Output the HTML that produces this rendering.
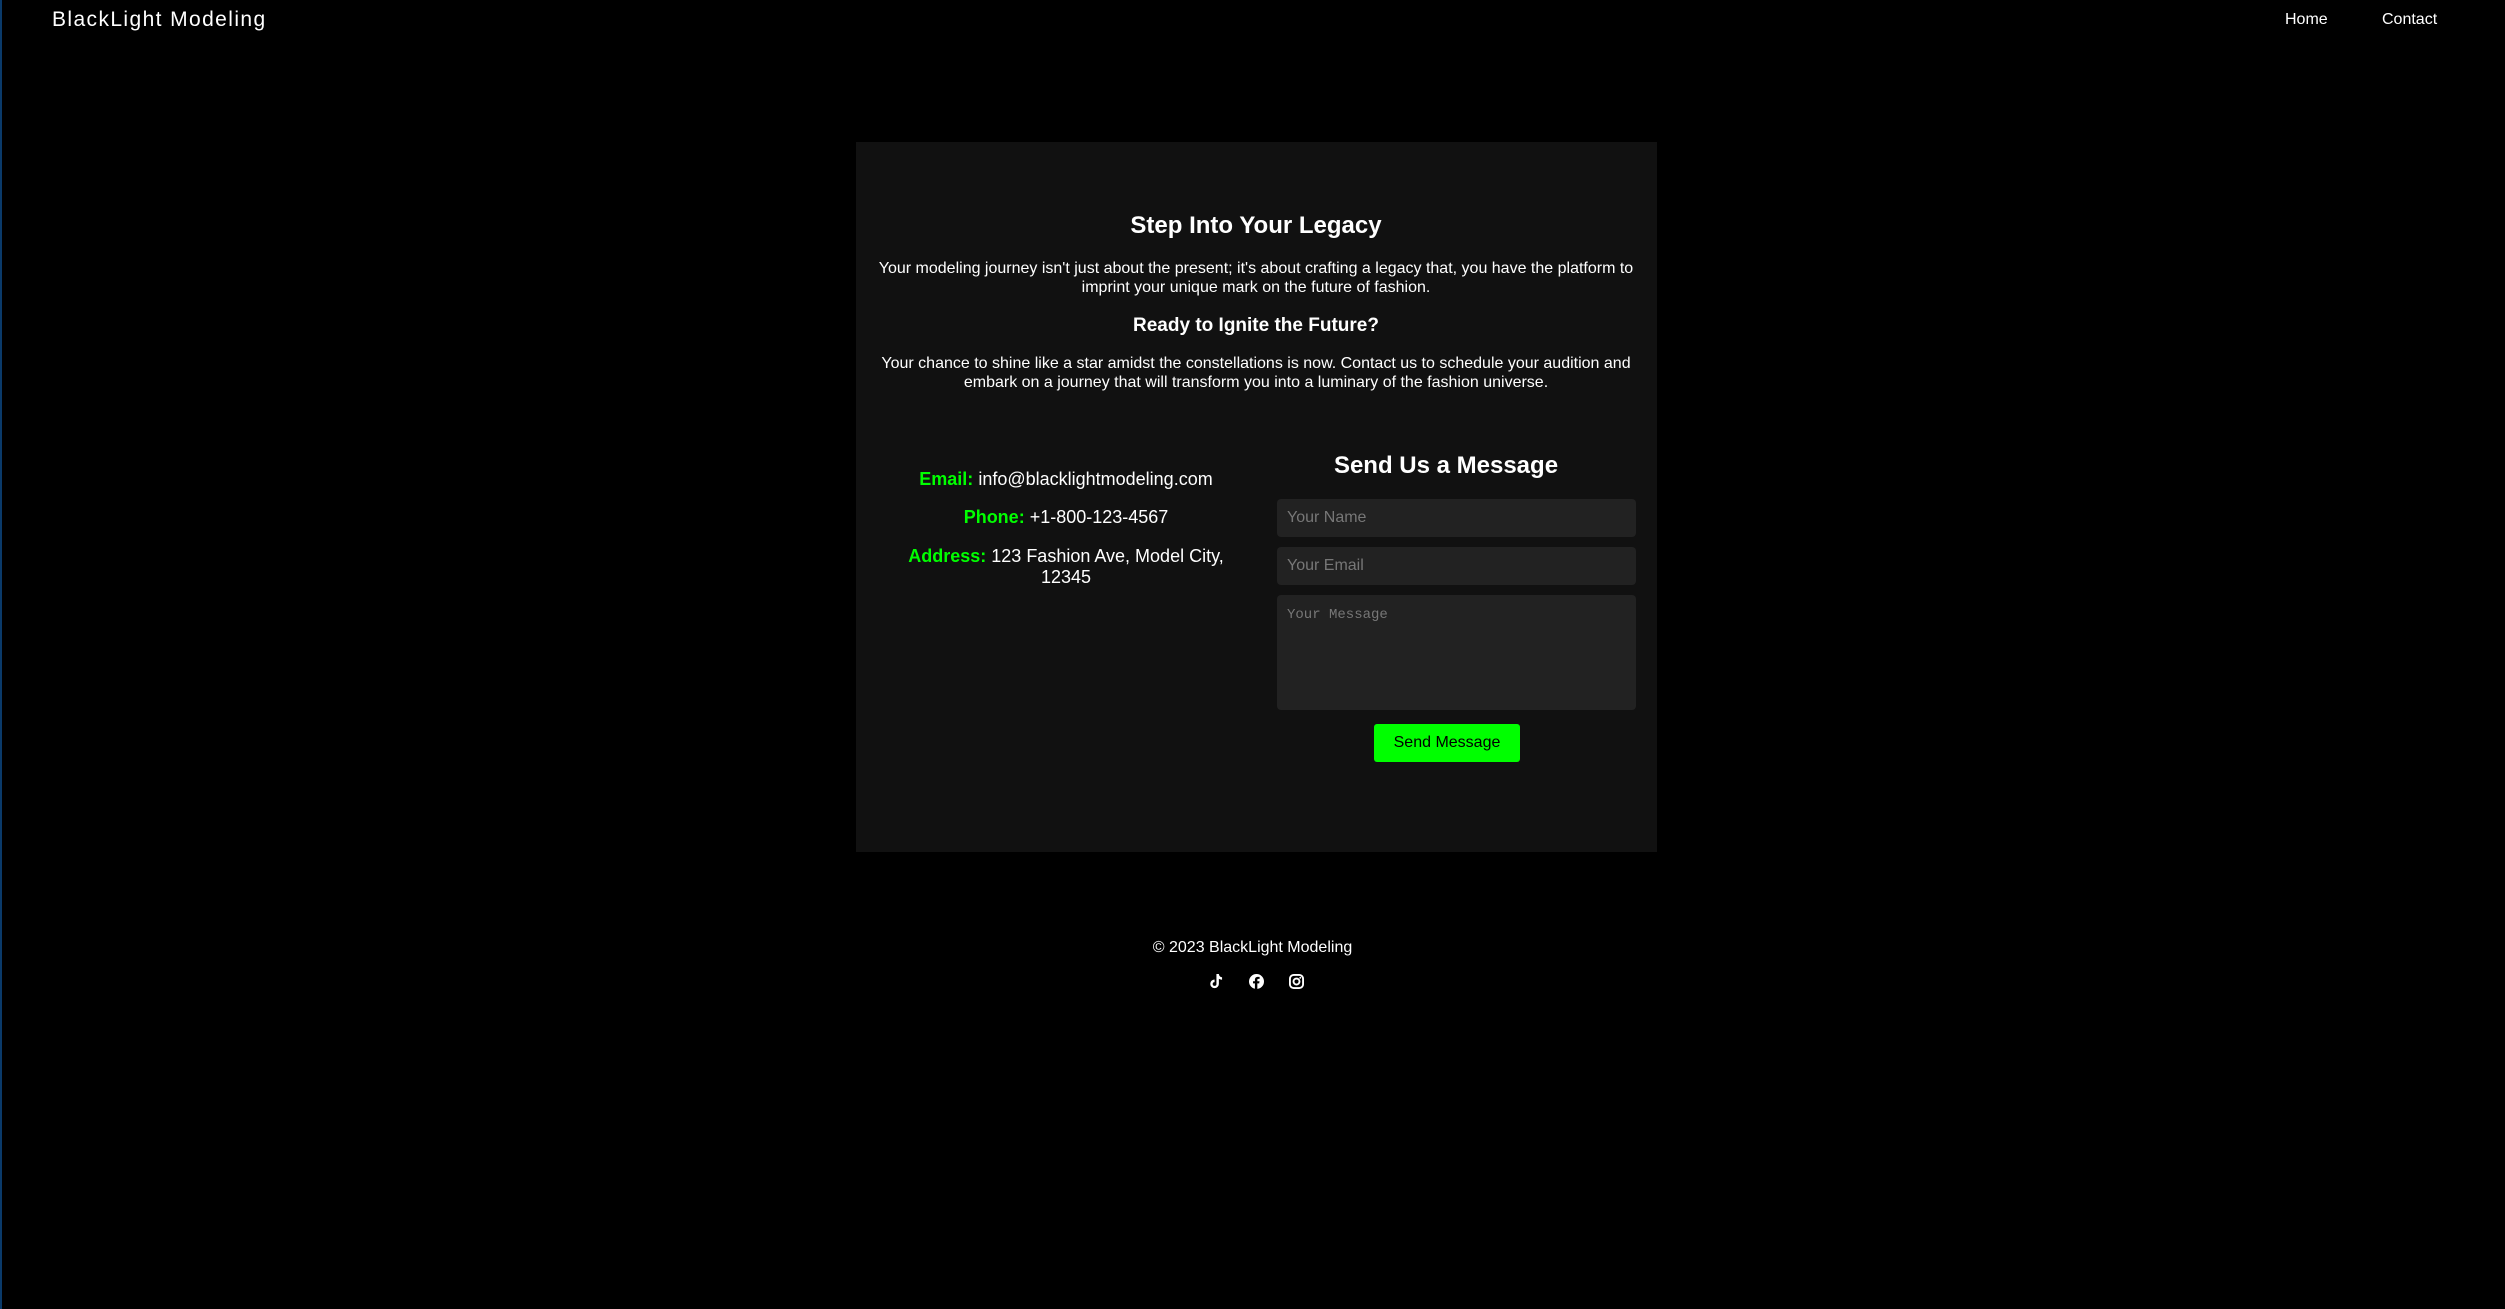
<!DOCTYPE html>
<html><head><meta charset="utf-8"><style>
*{margin:0;padding:0;box-sizing:border-box}
html,body{width:2505px;height:1309px;background:#000;overflow:hidden;font-family:"Liberation Sans",Arial,sans-serif;color:#fff}
body{position:relative}
.edge{position:absolute;left:0;top:0;width:2px;height:1309px;background:#0a3a6a}
.a{position:absolute;white-space:nowrap}
.c{text-align:center}
.logo{left:52px;top:8px;font-size:21px;letter-spacing:1.4px}
.nav{top:11px;font-size:16px}
.card{position:absolute;left:856px;top:142px;width:801px;height:710px;background:#111}
.inp{position:absolute;left:1277px;width:359px;background:#222;border-radius:4px;color:#777;font-size:16px;padding:0 10px}
.g{color:#00ff00;font-weight:bold}
</style></head><body>
<div class="edge"></div>
<div class="a logo">BlackLight Modeling</div>
<div class="a nav" style="left:2285px">Home</div>
<div class="a nav" style="left:2382px">Contact</div>
<div class="card"></div>
<div class="a c" style="left:856px;width:800px;top:212px;font-size:24px;font-weight:bold">Step Into Your Legacy</div>
<div class="a c" style="left:856px;width:800px;top:260px;font-size:16px;line-height:18.5px;white-space:normal;padding:0 20px">Your modeling journey isn't just about the present; it's about crafting a legacy that, you have the platform to imprint your unique mark on the future of fashion.</div>
<div class="a c" style="left:856px;width:800px;top:315px;font-size:19px;font-weight:bold">Ready to Ignite the Future?</div>
<div class="a c" style="left:856px;width:800px;top:355px;font-size:16px;line-height:18.5px;white-space:normal;padding:0 20px">Your chance to shine like a star amidst the constellations is now. Contact us to schedule your audition and embark on a journey that will transform you into a luminary of the fashion universe.</div>
<div class="a c" style="left:876px;width:380px;top:469px;font-size:18px"><span class="g">Email:</span> info@blacklightmodeling.com</div>
<div class="a c" style="left:876px;width:380px;top:507px;font-size:18px"><span class="g">Phone:</span> +1-800-123-4567</div>
<div class="a c" style="left:896px;width:340px;top:546px;font-size:18px;line-height:21px;white-space:normal"><span class="g">Address:</span> 123 Fashion Ave, Model City, 12345</div>
<div class="a c" style="left:1246px;width:400px;top:452px;font-size:24px;font-weight:bold">Send Us a Message</div>
<div class="inp" style="top:499px;height:38px;line-height:38px">Your Name</div>
<div class="inp" style="top:547px;height:38px;line-height:38px">Your Email</div>
<div class="inp" style="top:595px;height:115px;padding-top:12px;font-family:'Liberation Mono',monospace;font-size:14px">Your Message</div>
<div class="a c" style="left:1374px;top:724px;width:146px;height:38px;line-height:38px;background:#00ff00;color:#000;border-radius:3px;font-size:16px">Send Message</div>
<div class="a c" style="left:1000px;width:505px;top:939px;font-size:16px">© 2023 BlackLight Modeling</div>
<svg class="a" style="left:1208px;top:974px" width="15" height="15" viewBox="0 0 16 16"><path fill="#fff" d="M9 0h2.6c.2 2 1.5 3.3 3.4 3.5v2.6c-1.3 0-2.5-.4-3.4-1v5.4a4.6 4.6 0 1 1-4.6-4.6v2.7a2 2 0 1 0 2 2z"/></svg>
<svg class="a" style="left:1249px;top:974px" width="15" height="15" viewBox="0 0 16 16"><circle cx="8" cy="8" r="8" fill="#fff"/><path fill="#000" d="M8.9 16V10h2l.3-2.3H8.9V6.3c0-.6.2-1.1 1.1-1.1h1.3V3.1c-.2 0-1-.1-1.9-.1-1.9 0-3.1 1.1-3.1 3.2v1.5H4.3V10h2v6z"/></svg>
<svg class="a" style="left:1289px;top:974px" width="15" height="15" viewBox="0 0 16 16"><rect x="1" y="1" width="14" height="14" rx="4" fill="none" stroke="#fff" stroke-width="2"/><circle cx="8" cy="8" r="3.2" fill="none" stroke="#fff" stroke-width="2"/><circle cx="12" cy="4" r="1" fill="#fff"/></svg>
</body></html>
